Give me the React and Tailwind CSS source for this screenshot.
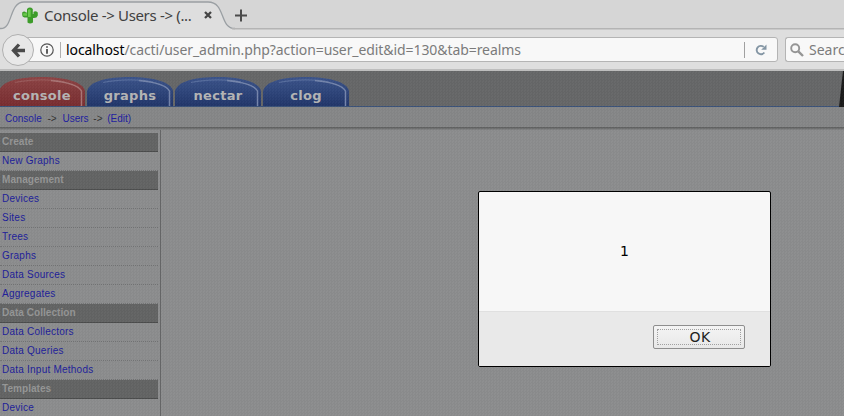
import React from "react";

const TABS = [
  { label: "console", red: true },
  { label: "graphs" },
  { label: "nectar" },
  { label: "clog" },
];

const MENU = [
  { title: "Create", items: ["New Graphs"] },
  { title: "Management", items: ["Devices", "Sites", "Trees", "Graphs", "Data Sources", "Aggregates"] },
  { title: "Data Collection", items: ["Data Collectors", "Data Queries", "Data Input Methods"] },
  { title: "Templates", items: ["Device"] },
];

function TabStrip() {
  return (
    <div className="relative h-[30px] bg-[#d6d6d6]">
      <svg className="absolute inset-0" width="844" height="30" viewBox="0 0 844 30">
        <path d="M0 28.5H1C13 28.5 9 2 24 2H208C226 2 219 28.500 235 28.500H844V30H0Z" fill="#dedede" />
        <path d="M0 28.5H1C13 28.5 9 2 24 2H208C226 2 219 28.500 235 28.500" fill="none" stroke="#9a9fa3" strokeWidth="1.300" />
        <path d="M232 28.700H844" stroke="#b4b4b4" strokeWidth="1.400" />
        <path d="M235 15.500H247M241 9.500V21.500" stroke="#4b4b4b" strokeWidth="2" />
      </svg>
      <div className="relative flex h-[30px] items-center pl-[22px]">
        <svg width="16" height="17" viewBox="0 0 16 17">
          <path d="M5.500 15.500V10.500H2.500Q.2 10 .2 8V5.500Q2.300 3.500 4 5.500H5V2Q8 -.8 10.800 2V7H11.500V5Q13.500 3.500 15.800 5.500V8.500Q15 11 12 11H11V15.500Q8 17.500 5.500 15.500Z" fill="#3d9c2a" />
          <path d="M6 10V3Q7.500 1.300 8.700 3V10ZM1.200 6.200H5V8.700H1.200Z" fill="#69c94c" />
        </svg>
        <span className="ml-[6px] w-[148px] whitespace-nowrap font-['Noto_Sans',sans-serif] text-[15px] tracking-[-0.33px] text-[#404040]">
          Console -&gt; Users -&gt; (...
        </span>
        <svg className="ml-[12px]" width="8" height="8" viewBox="0 0 8 8">
          <path d="M1 1L7 7M7 1L1 7" stroke="#454545" strokeWidth="2.300" />
        </svg>
      </div>
    </div>
  );
}

function NavBar() {
  return (
    <div className="relative flex h-[41px] items-center border-b-2 border-[#bdbdbd] bg-[#dedede] font-['Noto_Sans',sans-serif] text-[14px]">
      <div className="ml-[18px] flex h-[25px] w-[760px] shrink-0 items-center rounded-r-[3px] border border-[#b4b4b4] bg-[#f8f8f8] pl-[21px]">
        <svg className="shrink-0" width="14" height="14" viewBox="0 0 14 14">
          <circle cx="7" cy="7" r="6.200" fill="none" stroke="#555" strokeWidth="1.200" />
          <path d="M7 3.200V4.800M7 6V10.700" stroke="#444" strokeWidth="1.700" />
        </svg>
        <div className="ml-[6px] h-4 w-px shrink-0 bg-[#b0b0b0]" />
        <span className="ml-[5px] w-[678px] shrink-0 whitespace-nowrap tracking-[-0.08px] text-[#7b7b7b]">
          <span className="text-black">localhost</span>/cacti/user_admin.php?action=user_edit&amp;id=130&amp;tab=realms
        </span>
        <div className="h-4 w-px shrink-0 bg-[#a0a0a0]" />
        <svg className="ml-[10px] shrink-0" width="12" height="12" viewBox="0 0 12 12">
          <path d="M9.300 8.500A4.200 4.200 0 1 1 8.700 2.900" fill="none" stroke="#8496a4" strokeWidth="1.900" />
          <path d="M11.500 .5V5.800H6.200Z" fill="#8496a4" />
        </svg>
      </div>
      <div className="ml-[7px] flex h-[25px] w-[59px] shrink-0 items-center overflow-hidden rounded-l-[3px] border border-r-0 border-[#b4b4b4] bg-[#f8f8f8] pl-[4px] text-[#7b7b7b]">
        <svg className="shrink-0" width="14" height="14" viewBox="0 0 14 14">
          <circle cx="5.200" cy="5.200" r="4" fill="none" stroke="#959595" strokeWidth="1.900" />
          <path d="M8.300 8.300L13 13" stroke="#959595" strokeWidth="2.400" />
        </svg>
        <span className="ml-[5px]">Searc</span>
      </div>
      <div className="absolute left-[2px] top-[4px] flex h-[32px] w-[32px] items-center justify-center rounded-full border border-[#b0b0b0] bg-[#e8e8e8]">
        <svg width="15" height="15" viewBox="0 0 15 15">
          <path d="M8 1.500L2.500 7.500L8 13.500M3 7.500H14" fill="none" stroke="#4a4a4a" strokeWidth="3.300" />
        </svg>
      </div>
    </div>
  );
}

function CactiTab({ label, red }) {
  const id = "fill-" + label;
  return (
    <div className={red ? "relative -ml-px h-[29px] w-[86px]" : "relative h-[29px] w-[86px]"}>
      <svg className="absolute inset-0" width="86" height="29" viewBox="0 0 86 29">
        <defs>
          <linearGradient id={id} x1="0" y1="0" x2="0" y2="1">
            <stop offset="0" stopColor={red ? "#8d4344" : "#3b548b"} />
            <stop offset="1" stopColor={red ? "#782d30" : "#22366a"} />
          </linearGradient>
        </defs>
        <path d="M0 29V14C3 4 20 0 43 0S84 5 86 14V29Z" fill={`url(#${id})`} />
        <path d="M16 5.500C32 2 54 2 66 5" fill="none" stroke={red ? "#98595a" : "#566c9c"} strokeWidth="1.200" />
        <path d="M52 3.500Q78 6 82.500 14V29" fill="none" stroke={red ? "#a87474" : "#7485ab"} strokeWidth="1.500" />
      </svg>
      <span className="relative block pt-[10px] text-center font-['DejaVu_Sans',sans-serif] text-[13px] font-bold leading-[18px] tracking-[0.3px] text-[#b5b5b5]">
        {label}
      </span>
    </div>
  );
}

function Sidebar() {
  return (
    <div className="h-[286px] w-[161px] shrink-0 overflow-hidden border-r border-[#666768] pt-[3px] text-[10px] leading-[18px]">
      {MENU.map((group) => (
        <div key={group.title} className="w-[158px]">
          <div className="h-[19px] border-b border-[#4b4c4c] bg-[#636464] pl-[2px] font-bold tracking-[0.05px] text-[#959696]">{group.title}</div>
          {group.items.map((item) => (
            <div key={item} className="h-[19px] border-b border-dotted border-[#727374] pl-[2px] tracking-[0.23px] text-[#20209a]">{item}</div>
          ))}
        </div>
      ))}
    </div>
  );
}

function AlertDialog() {
  return (
    <div className="absolute left-[478px] top-[191px] flex h-[176px] w-[293px] flex-col overflow-hidden rounded-[2px] border border-black bg-[#f7f7f7] font-['DejaVu_Sans',sans-serif] text-[14px] text-[#222]">
      <div className="flex h-[119px] items-center justify-center text-black">1</div>
      <div className="flex flex-1 justify-end border-t border-[#e0e0e0] bg-[#e9e9e9] pr-[25px] pt-[13px]">
        <button className="h-[24px] w-[92px] rounded-[2px] border border-[#8e8e8e] bg-gradient-to-b from-[#f4f4f4] to-[#e8e8e8] p-[3px]">
          <span className="flex h-full items-center justify-center border border-dotted border-[#a0a0a0] pl-[2px] tracking-[0.4px]">OK</span>
        </button>
      </div>
    </div>
  );
}

export default function App() {
  return (
    <div className="relative h-[416px] w-[844px] overflow-hidden bg-[#8c8d8e] font-['Liberation_Sans',Arial,sans-serif]">
      <TabStrip />
      <NavBar />
      <div className="relative flex h-[36px] items-end gap-[2px] border-b border-[#3b5379] bg-[#666768]">
        {TABS.map((t) => (
          <CactiTab key={t.label} {...t} />
        ))}
        <svg className="absolute right-0 top-0" width="5" height="36" viewBox="0 0 5 36">
          <path d="M4 0H5V36H0Z" fill="#191919" />
        </svg>
      </div>
      <div className="h-[20px] bg-[#868788] pl-[5px] text-[10px] leading-[23px] text-[#2020a0]">
        Console <span className="mx-[3px] text-[#333]">-&gt;</span> Users <span className="mx-[2px] text-[#333]">-&gt;</span> (Edit)
      </div>
      <div className="h-[3px] bg-gradient-to-b from-[#5b5c5c] to-[#848586]" />
      <Sidebar />
      <div className="pointer-events-none absolute inset-x-0 bottom-0 top-[71px] bg-[repeating-conic-gradient(#00000005_0_25%,#ffffff05_0_50%)] bg-[length:3px_3px]" />
      <AlertDialog />
    </div>
  );
}
